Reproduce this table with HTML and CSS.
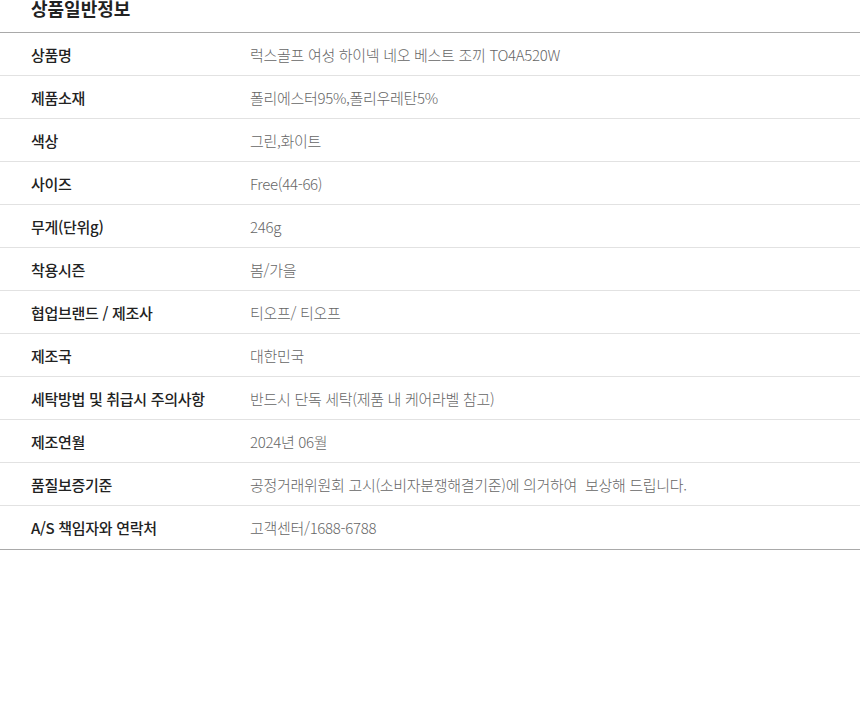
FILE: index.html
```html
<!DOCTYPE html>
<html lang="ko">
<head>
<meta charset="utf-8">
<title>상품일반정보</title>
<link rel="stylesheet" href="styles.css">
</head>
<body>
<section class="info">
  <div class="info-head"><h2 class="info-title">상품일반정보</h2></div>
  <div class="info-list">
    <div class="row"><div class="label">상품명</div><div class="value">럭스골프 여성 하이넥 네오 베스트 조끼 TO4A520W</div></div>
    <div class="row"><div class="label">제품소재</div><div class="value">폴리에스터95%,폴리우레탄5%</div></div>
    <div class="row"><div class="label">색상</div><div class="value">그린,화이트</div></div>
    <div class="row"><div class="label">사이즈</div><div class="value">Free(44-66)</div></div>
    <div class="row"><div class="label">무게(단위g)</div><div class="value">246g</div></div>
    <div class="row"><div class="label">착용시즌</div><div class="value">봄/가을</div></div>
    <div class="row"><div class="label">협업브랜드 / 제조사</div><div class="value">티오프/ 티오프</div></div>
    <div class="row"><div class="label">제조국</div><div class="value">대한민국</div></div>
    <div class="row"><div class="label">세탁방법 및 취급시 주의사항</div><div class="value">반드시 단독 세탁(제품 내 케어라벨 참고)</div></div>
    <div class="row"><div class="label">제조연월</div><div class="value">2024년 06월</div></div>
    <div class="row"><div class="label">품질보증기준</div><div class="value">공정거래위원회 고시(소비자분쟁해결기준)에 의거하여&nbsp; 보상해 드립니다.</div></div>
    <div class="row last"><div class="label">A/S 책임자와 연락처</div><div class="value">고객센터/1688-6788</div></div>
  </div>
</section>
</body>
</html>
```
FILE: styles.css
```css
html, body {
  margin: 0;
  padding: 0;
  background: #fff;
}
body {
  font-family: "Noto Sans CJK KR", "Noto Sans", sans-serif;
  width: 860px;
}
.info-head {
  height: 32px;
  border-bottom: 1px solid #a9a9a9;
  padding-left: 31px;
}
.info-title {
  margin: 0;
  padding-top: 1px;
  font-size: 18px;
  line-height: 14px;
  font-weight: 700;
  color: #222;
}
.info-list {
  display: flex;
  flex-direction: column;
}
.row {
  display: flex;
  align-items: center;
  height: 42px;
  border-bottom: 1px solid #e2e2e2;
  font-size: 15px;
  letter-spacing: -0.3px;
}
.row.last {
  height: 43px;
  border-bottom-color: #a9a9a9;
}
.label {
  width: 219px;
  padding-left: 31px;
  flex-shrink: 0;
  font-weight: 500;
  color: #222;
}
.value {
  font-weight: 300;
  color: #666;
}
```
